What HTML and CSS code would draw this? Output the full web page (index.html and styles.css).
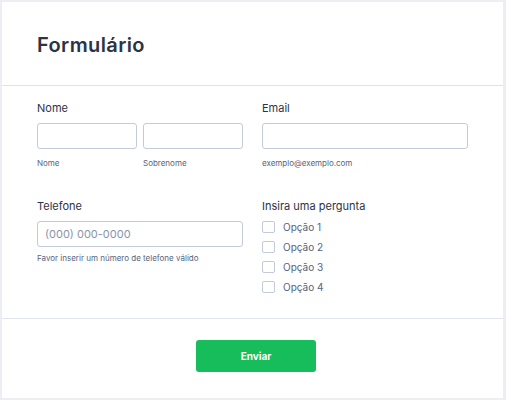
FILE: index.html
```html
<!DOCTYPE html>
<html lang="pt">
<head>
<meta charset="utf-8">
<title>Formulário</title>
<link rel="stylesheet" href="styles.css">
</head>
<body>
<div class="card">
  <header class="head">
    <h1 class="title">Formulário</h1>
  </header>
  <main class="body">
    <div class="grid">
      <div class="field">
        <label class="label">Nome</label>
        <div class="pair">
          <div class="sub">
            <input class="input" type="text">
            <span class="hint">Nome</span>
          </div>
          <div class="sub">
            <input class="input" type="text">
            <span class="hint">Sobrenome</span>
          </div>
        </div>
      </div>
      <div class="field">
        <label class="label">Email</label>
        <div class="sub">
          <input class="input" type="text">
          <span class="hint">exemplo@exemplo.com</span>
        </div>
      </div>
      <div class="field">
        <label class="label">Telefone</label>
        <div class="sub">
          <input class="input" type="text" placeholder="(000) 000-0000">
          <span class="hint hint-tight">Favor inserir um número de telefone válido</span>
        </div>
      </div>
      <div class="field">
        <label class="label">Insira uma pergunta</label>
        <div class="options">
          <label class="opt"><span class="box"></span>Opção 1</label>
          <label class="opt"><span class="box"></span>Opção 2</label>
          <label class="opt"><span class="box"></span>Opção 3</label>
          <label class="opt"><span class="box"></span>Opção 4</label>
        </div>
      </div>
    </div>
  </main>
  <footer class="foot">
    <button class="btn" type="button">Enviar</button>
  </footer>
</div>
</body>
</html>
```

FILE: styles.css
```css
* { box-sizing: border-box; }
html, body { margin: 0; padding: 0; }
body {
  background: #eceef4;
  font-family: Inter, "Noto Sans", sans-serif;
  color: #2c3345;
  width: 506px;
  height: 400px;
  padding: 2px 3px 2px 2px;
}
.card {
  background: #fff;
  width: 501px;
  height: 396px;
  display: flex;
  flex-direction: column;
}
.head {
  height: 84px;
  border-bottom: 1px solid #dfe2ea;
  padding: 29px 0 0 35px;
}
.title {
  margin: 0;
  font-size: 20px;
  line-height: 28px;
  font-weight: 600;
  letter-spacing: 0.4px;
  color: #2c3345;
}
.body {
  flex: 1;
  padding: 14px 0 0 35px;
  border-bottom: 1px solid #e3e5ec;
}
.grid {
  display: grid;
  grid-template-columns: 206px 206px;
  column-gap: 19px;
  row-gap: 29px;
  align-items: start;
}
.label {
  display: block;
  font-size: 11px;
  line-height: 16px;
  margin-bottom: 7px;
  color: #2c3345;
}
.pair {
  display: flex;
  gap: 6px;
}
.sub {
  display: flex;
  flex-direction: column;
  flex: 1;
}
.input {
  width: 100%;
  height: 26px;
  border: 1px solid #c3cad8;
  border-radius: 3px;
  padding: 0 7px;
  font-family: inherit;
  font-size: 11px;
  color: #2c3345;
  background: #fff;
  margin: 0;
}
.input::placeholder { color: #8894ab; }
.hint {
  margin-top: 8px;
  font-size: 8px;
  line-height: 12px;
  color: #57647e;
}
.hint-tight { margin-top: 5px; }
.options {
  display: flex;
  flex-direction: column;
  margin-top: -4px;
}
.opt {
  display: flex;
  align-items: center;
  height: 20px;
  font-size: 10px;
  color: #57647e;
}
.box {
  width: 13px;
  height: 12px;
  border: 1px solid #c3cad8;
  border-radius: 2px;
  margin-right: 8px;
  background: #fff;
}
.foot {
  height: 79px;
  display: flex;
  justify-content: center;
  padding: 21px 0 0 7px;
}
.btn {
  width: 120px;
  height: 32px;
  background: #18bd5b;
  border: none;
  border-radius: 3px;
  color: #fff;
  font-family: inherit;
  font-size: 10px;
  font-weight: 700;
}
```
